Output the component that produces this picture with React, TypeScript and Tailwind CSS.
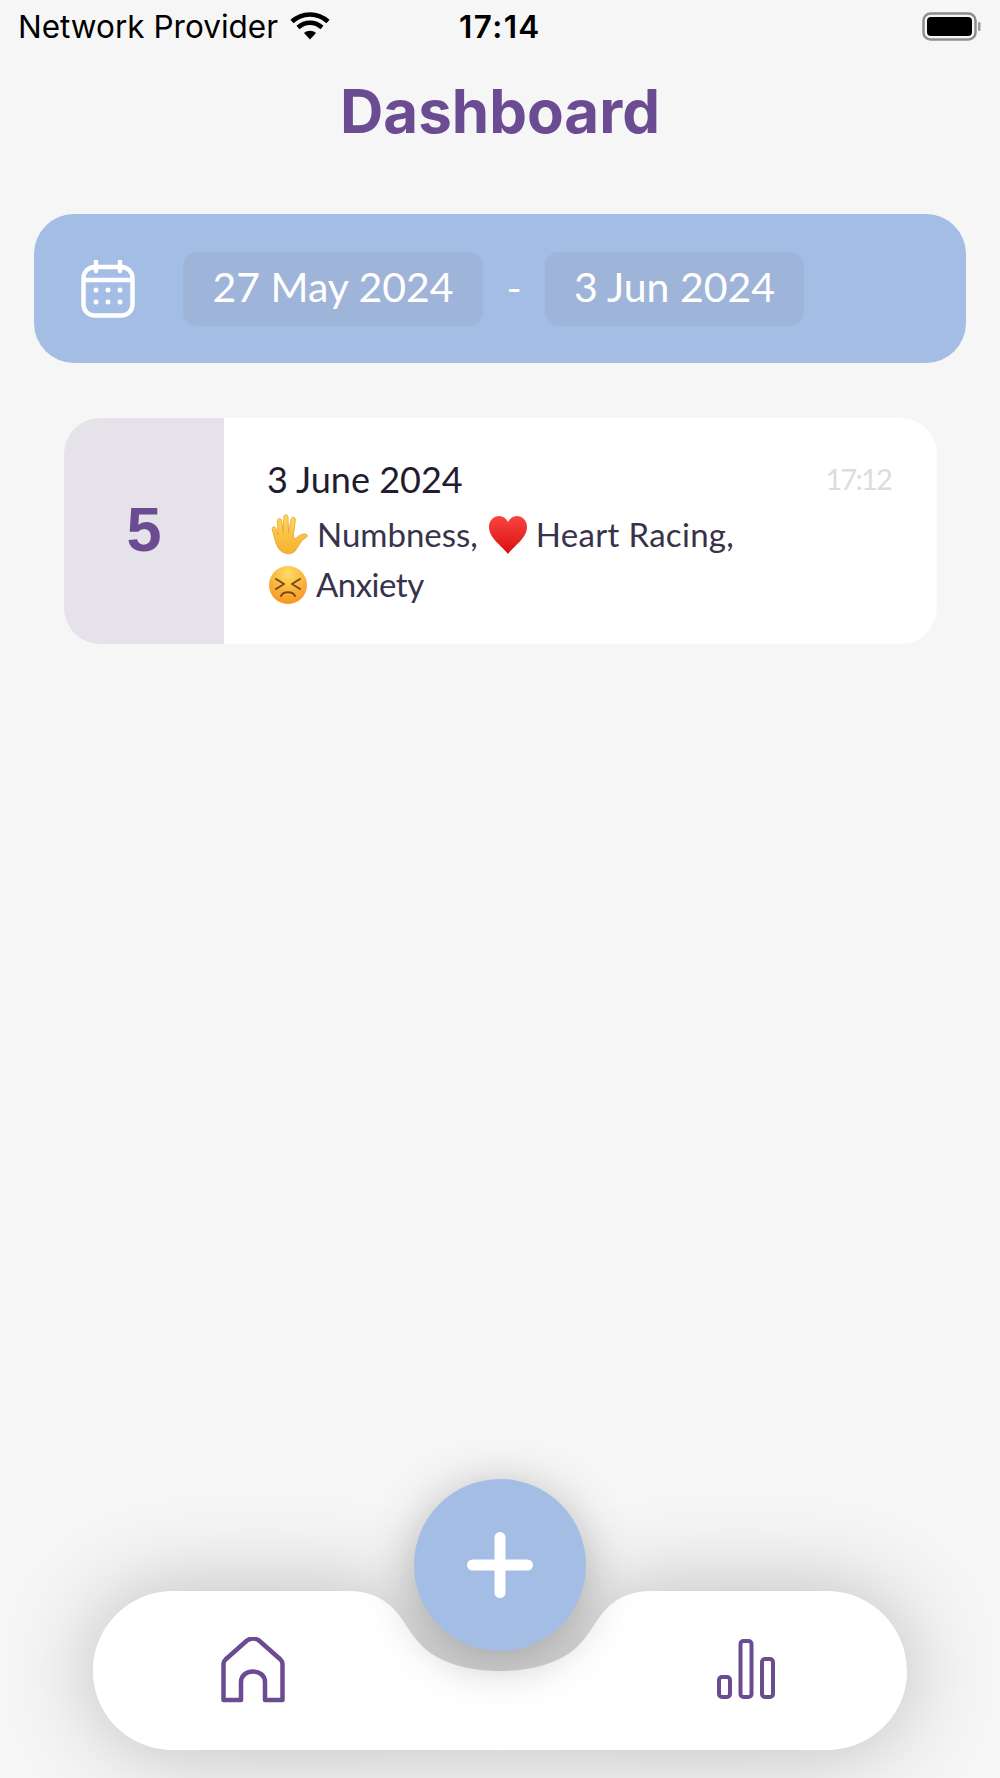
import React from "react";

const HandEmoji = () => (
  <svg viewBox="0 0 40 40" className="w-[42px] h-[42px] shrink-0">
    <defs>
      <linearGradient id="handFill" x1="0" y1="0" x2="0" y2="1">
        <stop offset="0" stopColor="#fdd860" />
        <stop offset="1" stopColor="#f5b02e" />
      </linearGradient>
    </defs>
    <path d="M11 33 C8 28 7 22 5 15 C4.500 12 7.500 11 8.500 14 L10.500 20 L10 6.500 C10 3.500 13.500 3.500 14 6.500 L15.500 18 L16 3 C16 0 20 0 20 3 L20.500 18 L23 5 C23.500 2 27.500 3 27 6 L25 21 L26.500 24 C29 22 32 19 35.500 19 C39 19 39 21.500 37 22.500 C32 25 30 31 27 35 C23 40 15 38 11 33 Z" fill="url(#handFill)" stroke="#e9a528" strokeWidth="0.800" />
  </svg>
);

const HeartEmoji = () => (
  <svg viewBox="0 0 40 40" className="w-[40px] h-[40px] shrink-0">
    <defs>
      <linearGradient id="heartFill" x1="0" y1="0" x2="0" y2="1">
        <stop offset="0" stopColor="#f9453f" />
        <stop offset="1" stopColor="#d90f12" />
      </linearGradient>
    </defs>
    <path d="M20 39 C14 31 1 23 1 12 C1 5 6 1 11 1 C15 1 18 3 20 7 C22 3 25 1 29 1 C34 1 39 5 39 12 C39 23 26 31 20 39 Z" fill="url(#heartFill)" />
  </svg>
);

const FaceEmoji = () => (
  <svg viewBox="0 0 40 40" className="w-[40px] h-[40px] shrink-0">
    <defs>
      <radialGradient id="faceFill" cx="0.5" cy="0.2" r="0.85">
        <stop offset="0" stopColor="#fddc62" />
        <stop offset="1" stopColor="#f5921f" />
      </radialGradient>
    </defs>
    <circle cx="20" cy="20" r="19" fill="url(#faceFill)" />
    <path d="M8 14 L16 19 L8 24 M32 14 L24 19 L32 24" fill="none" stroke="#7a4714" strokeWidth="2" strokeLinecap="round" strokeLinejoin="round" />
    <path d="M13 31 C15 26 25 26 27 31" fill="none" stroke="#7a4714" strokeWidth="2" strokeLinecap="round" />
  </svg>
);

const Wifi = () => (
  <svg viewBox="0 0 40 28" className="w-[40px] h-[28px]">
    <path d="M2 9.500 C12 0 28 0 38 9.500" fill="none" stroke="#000" strokeWidth="4.500" />
    <path d="M8 15.500 C15 9 25 9 32 15.500" fill="none" stroke="#000" strokeWidth="4.500" />
    <path d="M14 21 C17.500 18 22.500 18 26 21 L20 27.500 Z" fill="#000" />
  </svg>
);

const Battery = () => (
  <svg viewBox="0 0 60 30" className="w-[60px] h-[30px]">
    <rect x="1.500" y="1.500" width="52" height="26" rx="7" fill="none" stroke="#8e8e8e" strokeWidth="2.500" />
    <rect x="5" y="5" width="45" height="19" rx="4" fill="#000" />
    <rect x="56" y="10" width="2.500" height="9" rx="1.200" fill="#9a9a9a" />
  </svg>
);

const CalendarIcon = () => (
  <svg viewBox="0 0 54 58" className="w-[54px] h-[58px]" fill="none" stroke="#fff" strokeWidth="4.500">
    <rect x="2.500" y="7" width="49" height="48.500" rx="11" />
    <path d="M2.500 20 H51.500" />
    <path d="M15 1.500 V11 M39 1.500 V11" strokeLinecap="round" />
    <g fill="#fff" stroke="none">
      <circle cx="15" cy="30" r="2.500" />
      <circle cx="27" cy="30" r="2.500" />
      <circle cx="39" cy="30" r="2.500" />
      <circle cx="15" cy="42" r="2.500" />
      <circle cx="27" cy="42" r="2.500" />
      <circle cx="39" cy="42" r="2.500" />
    </g>
  </svg>
);

const HomeIcon = () => (
  <svg viewBox="0 0 64 66" className="w-[64px] h-[66px]" fill="none" stroke="#6b4c93" strokeWidth="4.500" strokeLinejoin="round">
    <path d="M2.500 63 V27 C2.500 25 3 24 4.500 22.500 L26 3.500 C29.500 1 34.500 1 38 3.500 L59.500 22.500 C61 24 61.500 25 61.500 27 V63 H44 V45 C44 31 20 31 20 45 V63 Z" />
  </svg>
);

const BarsIcon = () => (
  <svg viewBox="0 0 58 60" className="w-[58px] h-[60px]" fill="none" stroke="#6b4c93" strokeWidth="4">
    <rect x="2" y="38" width="11" height="20" rx="3" />
    <rect x="23.500" y="2" width="11" height="56" rx="3" />
    <rect x="45" y="20" width="11" height="38" rx="3" />
  </svg>
);

const NavShape = () => (
  <svg viewBox="0 0 814 159" className="absolute inset-0 w-[814px] h-[159px] overflow-visible drop-shadow-[0_0_44px_rgba(0,0,0,0.24)]">
    <path
      d="M80 0 H255 C280 0 295 10 306 24 C316 38 320 46 330 56 C348 73 378 80 407 80 C436 80 466 73 484 56 C494 46 498 38 508 24 C519 10 534 0 559 0 H734 C778 0 814 36 814 80 C814 124 778 159 734 159 H80 C36 159 0 124 0 80 C0 36 36 0 80 0 Z"
      fill="#fff"
    />
  </svg>
);

export default function App() {
  return (
    <div className="w-[1000px] h-[1778px] bg-[#f6f6f6] flex flex-col overflow-hidden font-['Lato',sans-serif]">
      <div className="h-[54px] relative flex items-center pl-[18px] pr-[18px] font-['Inter',sans-serif] text-[31.5px] text-black">
        <span>Network Provider</span>
        <span className="ml-[12px] -mt-[3px]"><Wifi /></span>
        <span className="absolute left-[459px] font-semibold tracking-[1.4px]">17:14</span>
        <span className="ml-auto"><Battery /></span>
      </div>

      <h1 className="mt-[24px] h-[66px] flex items-center justify-center font-['Inter',sans-serif] text-[60px] font-bold text-[#6b4c93] leading-none">Dashboard</h1>

      <div className="mt-[70px] mx-[34px] h-[149px] rounded-[40px] bg-[#a4bde5] flex items-center pl-[47px] text-white text-[41px]">
        <CalendarIcon />
        <div className="ml-[48px] w-[300px] h-[74px] rounded-[14px] bg-[#9fb4d9] flex items-center justify-center pb-[4px]">27 May 2024</div>
        <div className="w-[62px] text-center -mt-[2px]">-</div>
        <div className="w-[259px] h-[74px] rounded-[14px] bg-[#9fb4d9] flex items-center justify-center pb-[4px]">3 Jun 2024</div>
      </div>

      <div className="mt-[55px] ml-[64px] w-[873px] h-[226px] rounded-[36px] bg-white overflow-hidden flex">
        <div className="w-[160px] bg-[#e5e2ea] flex items-center justify-center pb-[4px] font-['Liberation_Sans',sans-serif] font-bold text-[63px] text-[#6b4c93]">5</div>
        <div className="flex-1 pl-[43px] pr-[46px] pt-[38px]">
          <div className="flex items-center justify-between h-[46px]">
            <span className="text-[36px] text-[#221c30]">3 June 2024</span>
            <span className="text-[29px] tracking-[-1.8px] text-[#dcdce0]">17:12</span>
          </div>
          <div className="mt-[12px] flex items-center h-[42px] text-[33px] text-[#38334a]">
            <HandEmoji />
            <span className="ml-[8px]">Numbness,</span>
            <span className="ml-[10px]"><HeartEmoji /></span>
            <span className="ml-[8px] tracking-[0.3px]">Heart Racing,</span>
          </div>
          <div className="mt-[8px] flex items-center h-[42px] text-[33px] text-[#38334a]">
            <span className="ml-[1px]"><FaceEmoji /></span>
            <span className="ml-[8px] tracking-[-0.5px]">Anxiety</span>
          </div>
        </div>
      </div>

      <div className="mt-auto mb-[28px] ml-[93px] w-[814px] h-[159px] relative">
        <NavShape />
        <div className="absolute left-[128px] top-[46px]"><HomeIcon /></div>
        <div className="absolute left-[624px] top-[48px]"><BarsIcon /></div>
        <div className="absolute left-[321px] top-[-112px] w-[172px] h-[172px] rounded-full bg-[#a4bde5] flex items-center justify-center shadow-[0_10px_50px_rgba(0,0,0,0.3)]">
          <svg viewBox="0 0 66 66" className="w-[66px] h-[66px]" stroke="#fff" strokeWidth="11" strokeLinecap="round">
            <path d="M33 5.500 V60.500 M5.500 33 H60.500" />
          </svg>
        </div>
      </div>
    </div>
  );
}
